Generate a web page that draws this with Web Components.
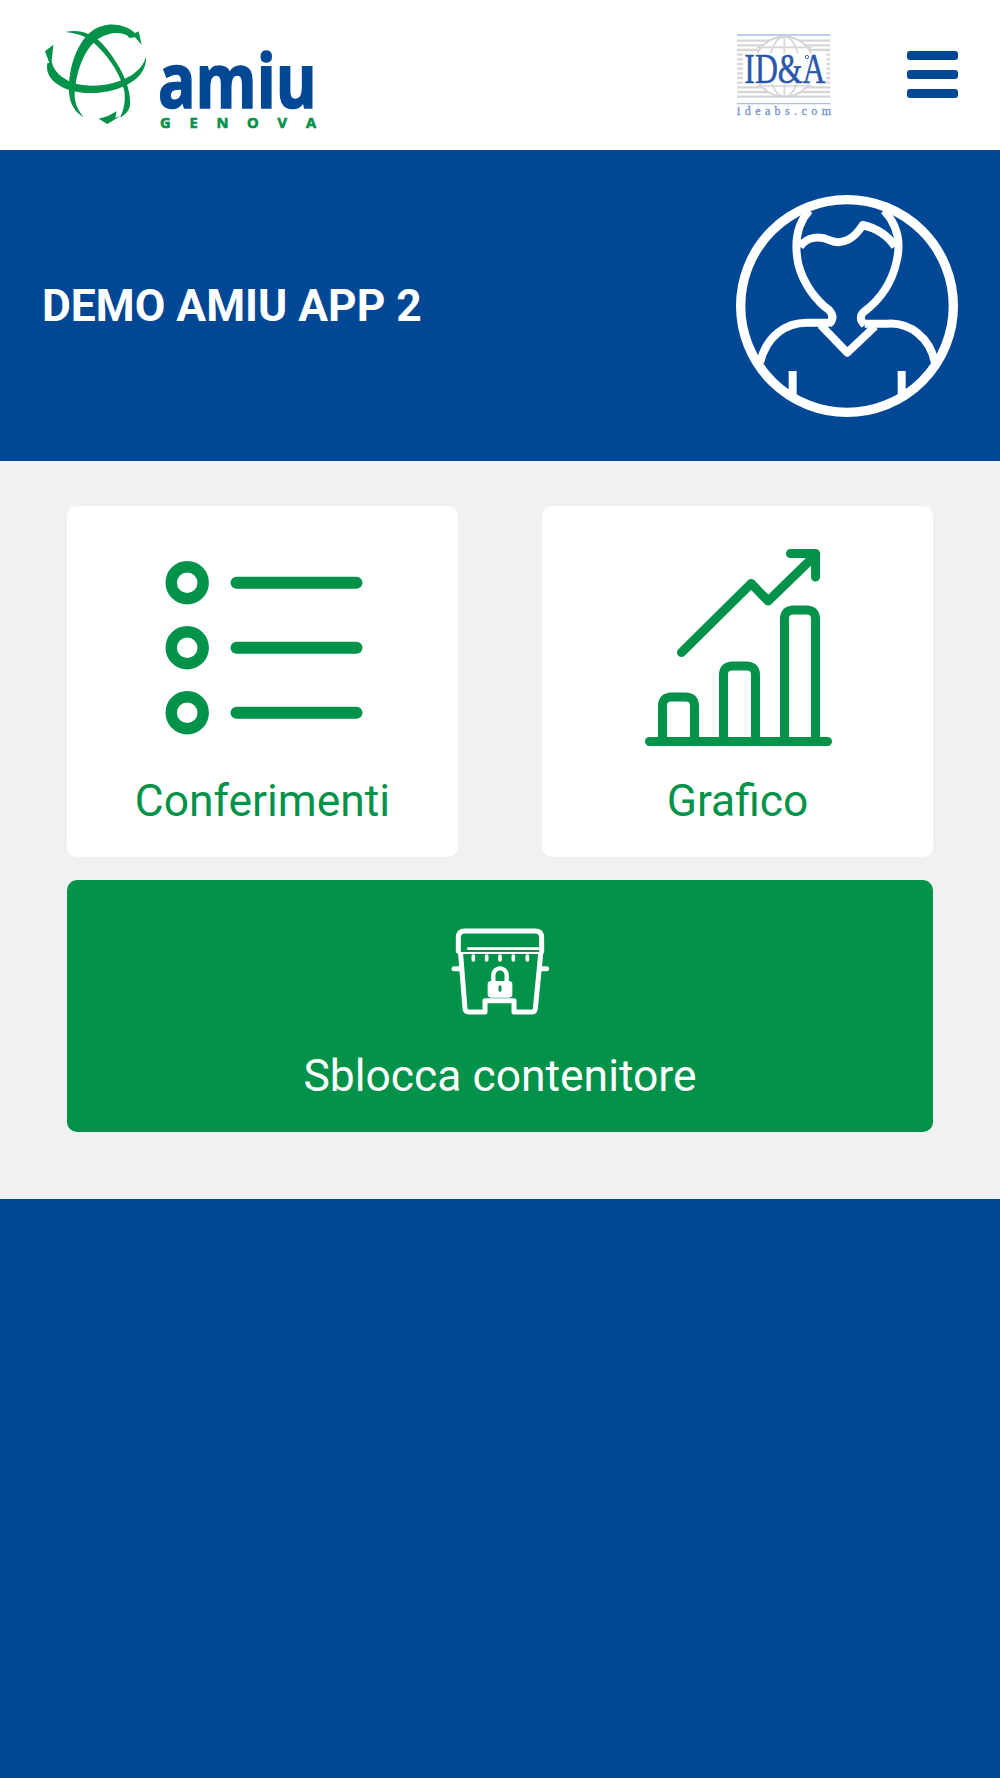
<!DOCTYPE html>
<html lang="it">
<head>
<meta charset="utf-8">
<title>AMIU</title>
<style>
html, body { margin: 0; height: 100%; }
body {
  background: #004896;
  font-family: Roboto, "Liberation Sans", sans-serif;
}
</style>
</head>
<body>
<amiu-header></amiu-header>
<user-banner>DEMO AMIU APP 2</user-banner>
<tile-grid>
  <menu-tile label="Conferimenti" icon="list"></menu-tile>
  <menu-tile label="Grafico" icon="chart"></menu-tile>
  <menu-tile label="Sblocca contenitore" icon="lock" wide></menu-tile>
</tile-grid>

<script>
const headerTemplate = document.createElement("template");
headerTemplate.innerHTML = `
<style>
:host{
    display: flex;
    align-items: center;
    height: 150px;
    padding: 0 42px 0 40px;
    background: #fff;
    box-sizing: border-box;
}
svg{ display: block; overflow: visible; }
.ida{ margin-left: auto; }
.burger{
    display: flex;
    flex-direction: column;
    gap: 10px;
    width: 51px;
    margin: 0 0 1px 76px;
}
.burger span{
    height: 9px;
    background: #004896;
    border-radius: 3px;
}
</style>
<svg class="logo" width="280" height="115" viewBox="60 50 840 345">
  <g fill="#03924a">
    <path d="M345 95C310 65 255 60 215 90C170 125 145 200 147 270C148 305 165 335 192 348C172 325 160 300 165 265C170 205 195 140 235 112C270 90 305 90 332 108Z"/>
    <path d="M316 94L334 100L356 90L365 130L345 108L328 110Z"/>
    <path d="M136 92C175 82 215 95 245 125C290 175 335 250 330 310C328 330 315 340 300 348C312 325 318 295 312 265C298 210 260 160 225 128C200 105 170 95 136 92Z"/>
    <path d="M236 352L262 345L290 330L286 349L300 345L262 368Z"/>
    <path d="M75 150L100 130L95 180C100 210 125 232 160 245C215 262 285 252 335 222C358 205 372 190 378 165C380 200 362 225 335 242C285 275 205 285 145 265C105 250 75 225 82 185L88 185Z"/>
  </g>
  <text x="414" y="320" textLength="476" lengthAdjust="spacingAndGlyphs" font-family="'Open Sans', sans-serif" font-weight="700" font-size="226" fill="#004896" stroke="#004896" stroke-width="5">amiu</text>
  <text x="420" y="380" textLength="468" lengthAdjust="spacing" font-family="'Open Sans', sans-serif" font-weight="700" font-size="44" fill="#03924a" stroke="#03924a" stroke-width="2">GENOVA</text>
</svg>
<svg class="ida" width="94" height="82" viewBox="80 72 282 246">
  <g stroke="#d6d6d6" stroke-width="7">
    <path d="M80 92H360M80 106H360M80 120H360M80 134H360M80 148H360M80 162H360M80 176H360M80 190H360M80 204H360M80 218H360M80 232H360M80 246H360M80 260H360"/>
  </g>
  <circle cx="222" cy="170" r="90" fill="#fff" stroke="#d2d2d2" stroke-width="5"/>
  <g fill="none" stroke="#d6d6d6" stroke-width="5">
    <ellipse cx="222" cy="170" rx="45" ry="90"/>
    <path d="M222 80V260M140 112H304M140 228H304"/>
  </g>
  <rect x="98" y="130" width="250" height="92" fill="#fff"/>
  <path d="M80 75H360M80 281H360" stroke="#a9bfe3" stroke-width="4"/>
  <text x="102" y="220" textLength="243" lengthAdjust="spacingAndGlyphs" font-family="'Liberation Serif', serif" font-size="126" fill="#2a57ab" stroke="#2a57ab" stroke-width="1.5">ID&amp;A</text>
  <circle cx="290" cy="141" r="5" fill="none" stroke="#2a57ab" stroke-width="2.5"/>
  <text x="80" y="314" textLength="282" lengthAdjust="spacing" font-family="'Liberation Serif', serif" font-size="36" fill="#6f8fcf" stroke="#6f8fcf" stroke-width="0.8">ideabs.com</text>
</svg>
<div class="burger"><span></span><span></span><span></span></div>
`;

class AmiuHeader extends HTMLElement{
    constructor(){
      super();
      this.attachShadow({mode: "open"});
      this.shadowRoot.appendChild(headerTemplate.content.cloneNode(true));
    }
}
customElements.define('amiu-header', AmiuHeader);

const bannerTemplate = document.createElement("template");
bannerTemplate.innerHTML = `
<style>
:host{
    display: flex;
    align-items: center;
    justify-content: space-between;
    height: 311px;
    padding: 0 42px;
    background: #004896;
    color: #fff;
    box-sizing: border-box;
}
.name{
    font: 700 44.4px Roboto, "Liberation Sans", sans-serif;
}
svg{ display: block; }
</style>
<div class="name"><slot></slot></div>
<svg width="222" height="222" viewBox="48 42 666 666" fill="none" stroke="#fff" stroke-width="24" stroke-linecap="butt" stroke-linejoin="round">
  <circle cx="381" cy="375" r="319" stroke-width="28"/>
  <path d="M268 88C225 135 225 200 235 250C250 310 290 360 328 388Q348 410 326 430"/>
  <path d="M492 88C535 135 542 190 530 240C515 310 475 360 432 392Q412 410 434 432"/>
  <path d="M240 197C262 165 300 165 330 178C370 195 405 170 428 132C470 142 505 165 525 197"/>
  <path d="M120 545C140 462 200 425 260 425H330M434 428H505C570 425 630 470 645 545"/>
  <path d="M302 432L382 515L465 436"/>
  <path d="M218 570V645M545 570V640"/>
</svg>
`;

class UserBanner extends HTMLElement{
    constructor(){
      super();
      this.attachShadow({mode: "open"});
      this.shadowRoot.appendChild(bannerTemplate.content.cloneNode(true));
    }
}
customElements.define('user-banner', UserBanner);

const gridTemplate = document.createElement("template");
gridTemplate.innerHTML = `
<style>
:host{
    display: grid;
    grid-template-columns: 391px 391px;
    justify-content: space-between;
    row-gap: 23px;
    padding: 45px 67px 67px;
    background: #f1f1f1;
}
</style>
<slot></slot>
`;

class TileGrid extends HTMLElement{
    constructor(){
      super();
      this.attachShadow({mode: "open"});
      this.shadowRoot.appendChild(gridTemplate.content.cloneNode(true));
    }
}
customElements.define('tile-grid', TileGrid);

// icons are drawn in page-sized units, 220x200 box
const icons = {
  list: `<svg width="220" height="200" viewBox="152.5 549 220 200" fill="none" stroke="#03924a">
    <g stroke-width="11.4">
      <circle cx="186.7" cy="582.7" r="16"/>
      <circle cx="186.7" cy="647.7" r="16"/>
      <circle cx="186.7" cy="712.7" r="16"/>
    </g>
    <g stroke-width="12" stroke-linecap="round">
      <path d="M236 582.7H356M236 647.7H356M236 712.7H356"/>
    </g>
  </svg>`,
  chart: `<svg width="220" height="200" viewBox="627.5 549 220 200" fill="none" stroke="#03924a" stroke-width="9" stroke-linecap="round" stroke-linejoin="round">
    <path d="M649 741.5H827"/>
    <path d="M662 741V706Q662 697 671 697H685Q694 697 694 706V741"/>
    <path d="M723 741V675Q723 666 732 666H746Q755 666 755 675V741"/>
    <path d="M784 741V619Q784 610 793 610H806Q815 610 815 619V741"/>
    <path d="M681 652.5L750.7 583.5L767.7 601L815 555"/>
    <path d="M790 553.5H815V577"/>
  </svg>`,
  lock: `<svg width="100" height="90" viewBox="60 50 300 270" fill="none" stroke="#fff" stroke-width="15" stroke-linecap="round" stroke-linejoin="round">
    <path d="M85 125V85Q85 65 105 65H315Q335 65 335 85V125"/>
    <path d="M115 118H335" stroke-width="8"/>
    <path d="M85 131H338" stroke-width="6"/>
    <path d="M92 135L105 298Q106 308 116 308H165V274H252V308H305Q315 308 316 298L332 135"/>
    <path d="M72 178H90M333 178H350"/>
    <path d="M130 140V152M170 140V152M210 140V152M250 140V152M292 140V152" stroke-width="11"/>
    <path d="M190 218V197A20 20 0 0 1 230 197V218" stroke-width="13"/>
    <rect x="173" y="215" width="74" height="50" rx="10" fill="#fff" stroke="none"/>
    <path d="M210 232V243" stroke="#03924a" stroke-width="9"/>
  </svg>`
};

const tileTemplate = document.createElement("template");
tileTemplate.innerHTML = `
<style>
:host{
    display: flex;
    flex-direction: column;
    align-items: center;
    height: 351px;
    padding-top: 43px;
    background: #fff;
    color: #03924a;
    border-radius: 10px;
    box-sizing: border-box;
}
:host([wide]){
    grid-column: 1 / -1;
    height: 252px;
    padding-top: 46px;
    background: #03924a;
    color: #fff;
}
.icon{ display: flex; }
.icon svg{ display: block; }
.label{
    margin-top: 27px;
    font: 400 44.4px/50px Roboto, "Liberation Sans", sans-serif;
}
:host([wide]) .label{ margin-top: 35px; }
</style>
<div class="icon"></div>
<div class="label"></div>
`;

class MenuTile extends HTMLElement{
    constructor(){
      super();
      this.attachShadow({mode: "open"});
      this.shadowRoot.appendChild(tileTemplate.content.cloneNode(true));
    }

    connectedCallback(){
        this.render();
    }

    render(){
        const name = this.getAttribute('icon');
        this.shadowRoot.querySelector(".icon").innerHTML = icons[name];
        this.shadowRoot.querySelector(".label").textContent = this.getAttribute('label');
    }
}
customElements.define('menu-tile', MenuTile);
</script>
</body>
</html>
